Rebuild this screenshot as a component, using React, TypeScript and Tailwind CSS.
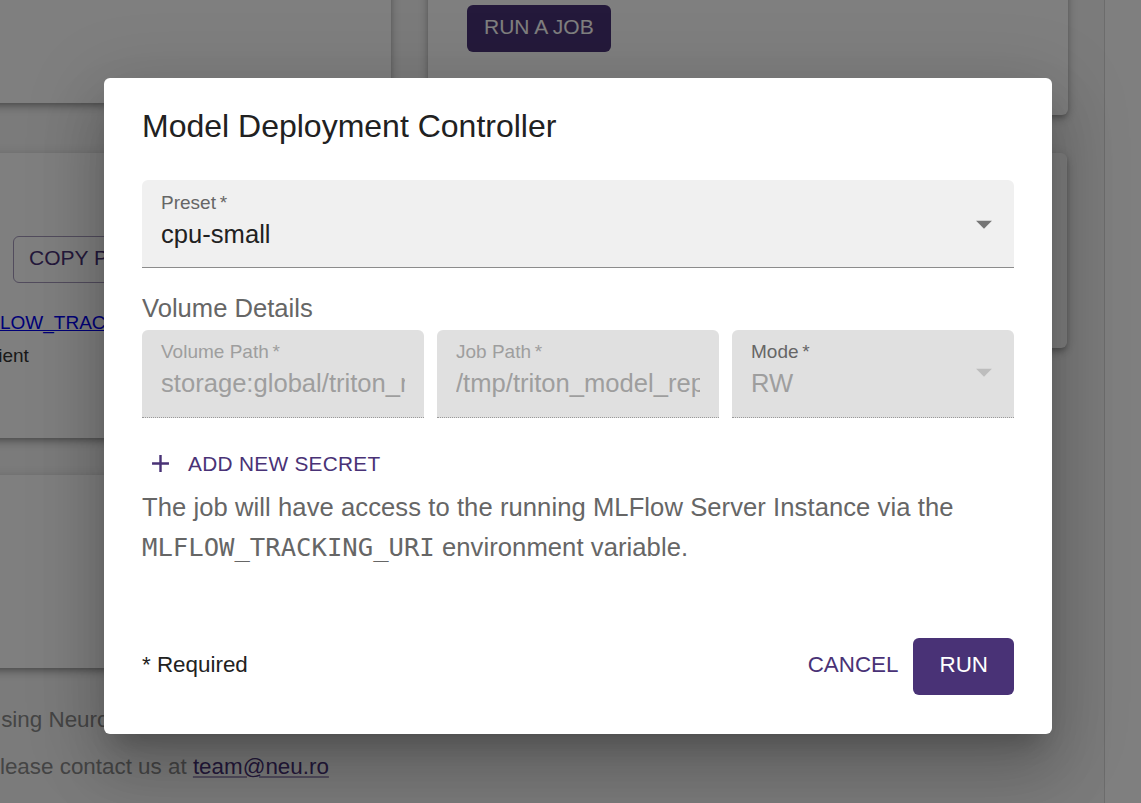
import React from "react";

const cardShadow =
  "shadow-[0_3px_5px_-1px_rgba(0,0,0,0.2),0_5px_8px_0_rgba(0,0,0,0.14),0_1px_14px_0_rgba(0,0,0,0.12)]";

function ArrowDrop({ color }: { color: string }) {
  return (
    <svg viewBox="0 0 24 24" className="h-[38px] w-[38px]" fill={color}>
      <path d="M7 10l5 5 5-5z" />
    </svg>
  );
}

function DisabledField({ label, value }: { label: string; value: string }) {
  return (
    <div className="h-[88px] overflow-hidden rounded-t-[6px] border-b border-dotted border-[#9a9a9a] bg-[#e0e0e0] px-[19px] pt-[8px]">
      <div className="whitespace-nowrap text-[19px] leading-[27px] text-[#9e9e9e]">
        {label}
        {"\u2009*"}
      </div>
      <div className="overflow-hidden whitespace-nowrap text-[25.6px] leading-[37px] text-[#9e9e9e]">
        {value}
      </div>
    </div>
  );
}

export default function App() {
  return (
    <div className="relative h-[803px] w-[1141px] overflow-hidden bg-white font-['Liberation_Sans',Arial,sans-serif]">
      {/* underlying page */}
      <div className="flex h-full">
        <main className="h-full w-[1105px] shrink-0 border-r border-[#d8d8d8] bg-[#f7f7f7]">
          <div className="-ml-[17px] -mt-[40px] flex w-[1085px] flex-col">
            <div className="flex items-start gap-[37px]">
              <div className={`h-[143px] w-[408px] rounded-[6px] bg-white ${cardShadow}`} />
              <div className={`h-[155px] w-[640px] rounded-[6px] bg-white pl-[39px] pt-[45px] ${cardShadow}`}>
                <button className="h-[47px] rounded-[6px] bg-[#493276] px-[17px] pb-[4px] text-[21px] uppercase leading-[26px] text-white">
                  Run a job
                </button>
              </div>
            </div>
            <div className="mt-[38px] flex items-start gap-[37px]">
              <div className={`h-[285px] w-[408px] overflow-hidden rounded-[6px] bg-white pl-[30px] pt-[83px] ${cardShadow}`}>
                <button className="h-[47px] whitespace-nowrap rounded-[6px] border border-[#a498ba] px-[15px] pb-[3px] text-[21px] uppercase text-[#493276]">
                  Copy path
                </button>
                <div className="-ml-[51px] mt-[26px] whitespace-nowrap text-[19px] leading-[28px] text-[#0000ee] underline">
                  MLFLOW_TRACKING_URI
                </div>
                <div className="-ml-[94px] mt-[5px] whitespace-nowrap text-[19px] leading-[28px] text-[#333]">
                  MLflow client
                </div>
              </div>
              <div className={`h-[195px] w-[639px] rounded-[6px] bg-white ${cardShadow}`} />
            </div>
            <div className={`mt-[37px] h-[193px] w-[408px] rounded-[6px] bg-white ${cardShadow}`} />
            <p className="ml-[2px] mt-[33px] whitespace-nowrap text-[22.4px] leading-[38px] text-[#8a8a8a]">
              Using Neuro Platform
            </p>
            <p className="ml-[2px] mt-[9px] whitespace-nowrap text-[22.4px] leading-[38px] text-[#8a8a8a]">
              Please contact us at{" "}
              <span className="text-[#493276] underline decoration-[#a498ba]">team@neu.ro</span>
            </p>
          </div>
        </main>
        <aside className="h-full flex-1 bg-white" />
      </div>

      {/* backdrop */}
      <div className="absolute inset-0 bg-black/50" />

      {/* dialog */}
      <div className="absolute left-[104px] top-[78px] flex h-[656px] w-[948px] flex-col rounded-[6px] bg-white shadow-[0_18px_24px_-11px_rgba(0,0,0,0.2),0_38px_61px_5px_rgba(0,0,0,0.14),0_14px_74px_13px_rgba(0,0,0,0.12)]">
        <h2 className="px-[38px] pb-[28px] pt-[23px] text-[32px] leading-[51px] text-[#212121]">
          Model Deployment Controller
        </h2>
        <div className="px-[38px]">
          <div className="relative h-[88px] rounded-t-[6px] border-b border-[#8c8c8c] bg-[#f0f0f0] px-[19px] pt-[9px]">
            <div className="text-[19px] leading-[27px] text-[#666]">Preset{"\u2009*"}</div>
            <div className="text-[25.6px] leading-[37px] text-[#212121]">cpu-small</div>
            <div className="absolute right-[11px] top-[25px]">
              <ArrowDrop color="#757575" />
            </div>
          </div>

          <div className="mt-[21px] text-[25.6px] leading-[38px] text-[#666]">Volume Details</div>

          <div className="mt-[3px] grid grid-cols-3 gap-[13px]">
            <DisabledField label="Volume Path" value="storage:global/triton_model_repository" />
            <DisabledField label="Job Path" value="/tmp/triton_model_repository" />
            <div className="relative h-[88px] rounded-t-[6px] border-b border-dotted border-[#9a9a9a] bg-[#e0e0e0] px-[19px] pt-[8px]">
              <div className="text-[19px] leading-[27px] text-[#666]">Mode{"\u2009*"}</div>
              <div className="text-[25.6px] leading-[37px] text-[#9e9e9e]">RW</div>
              <div className="absolute right-[11px] top-[23px]">
                <ArrowDrop color="#bdbdbd" />
              </div>
            </div>
          </div>

          <button className="mt-[21px] flex h-[48px] items-center pl-[4px] pr-[8px] text-[20.8px] uppercase tracking-[0.3px] text-[#493276]">
            <svg viewBox="0 0 24 24" className="h-[29px] w-[29px]" fill="#493276">
              <path d="M19 13h-6v6h-2v-6H5v-2h6V5h2v6h6v2z" />
            </svg>
            <span className="ml-[13px] pt-[2px]">Add new secret</span>
          </button>

          <p className="text-[25.6px] leading-[40px] tracking-[0.07px] text-[#666]">
            The job will have access to the running MLFlow Server Instance via the{" "}
            <code className="font-['DejaVu_Sans_Mono',monospace] text-[25.6px] tracking-normal">MLFLOW_TRACKING_URI</code>{" "}
            environment variable.
          </p>
        </div>

        <div className="mt-auto flex items-center justify-between px-[38px] pb-[39px]">
          <span className="pb-[3px] text-[22.4px] text-[#212121]">* Required</span>
          <div className="flex items-center">
            <button className="h-[57px] px-[12px] pb-[3px] text-[22.4px] uppercase text-[#493276]">Cancel</button>
            <button className="ml-[3px] h-[57px] rounded-[6px] bg-[#493276] px-[26px] pb-[3px] text-[22.4px] uppercase text-white">
              Run
            </button>
          </div>
        </div>
      </div>
    </div>
  );
}
